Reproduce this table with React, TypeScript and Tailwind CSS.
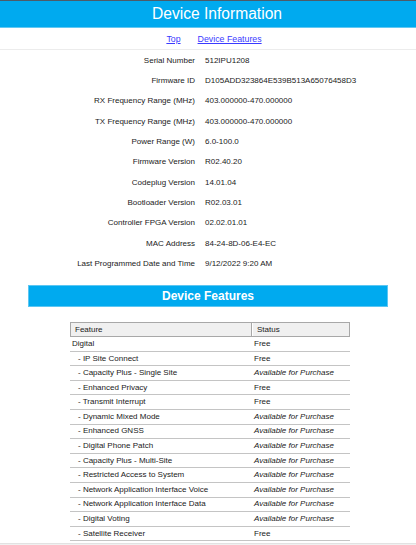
import React from "react";

const info: [string, string][] = [
  ["Serial Number", "512IPU1208"],
  ["Firmware ID", "D105ADD323864E539B513A65076458D3"],
  ["RX Frequency Range (MHz)", "403.000000-470.000000"],
  ["TX Frequency Range (MHz)", "403.000000-470.000000"],
  ["Power Range (W)", "6.0-100.0"],
  ["Firmware Version", "R02.40.20"],
  ["Codeplug Version", "14.01.04"],
  ["Bootloader Version", "R02.03.01"],
  ["Controller FPGA Version", "02.02.01.01"],
  ["MAC Address", "84-24-8D-06-E4-EC"],
  ["Last Programmed Date and Time", "9/12/2022 9:20 AM"],
];

const features: [string, string, boolean][] = [
  ["Digital", "Free", false],
  ["- IP Site Connect", "Free", true],
  ["- Capacity Plus - Single Site", "Available for Purchase", true],
  ["- Enhanced Privacy", "Free", true],
  ["- Transmit Interrupt", "Free", true],
  ["- Dynamic Mixed Mode", "Available for Purchase", true],
  ["- Enhanced GNSS", "Available for Purchase", true],
  ["- Digital Phone Patch", "Available for Purchase", true],
  ["- Capacity Plus - Multi-Site", "Available for Purchase", true],
  ["- Restricted Access to System", "Available for Purchase", true],
  ["- Network Application Interface Voice", "Available for Purchase", true],
  ["- Network Application Interface Data", "Available for Purchase", true],
  ["- Digital Voting", "Available for Purchase", true],
  ["- Satellite Receiver", "Free", true],
];

export default function App() {
  return (
    <div
      className="w-[416px] h-[545px] overflow-hidden bg-white text-[#1a1a1a]"
      style={{ fontFamily: '"Liberation Sans", Arial, sans-serif' }}
    >
      <div className="border-t border-[#4d5b68]">
        <div className="h-[26px] bg-[#00aaef] flex items-center justify-center pl-[18px] text-white text-[15.6px] leading-none">
          Device Information
        </div>
        <div className="h-px bg-[#63c8f2]" />
      </div>
      <div className="h-[22px] border-b border-[#ececec] flex items-center justify-center pl-[12px] gap-[17px] text-[8.8px] leading-none pt-[2px]">
        <span className="underline text-[#3a3aff]">Top</span>
        <span className="underline text-[#3a3aff]">Device Features</span>
      </div>
      <div className="flex flex-col pt-[0.5px]">
        {info.map(([k, v]) => (
          <div key={k} className="h-[20.33px] flex items-center text-[8px] leading-none">
            <div className="w-[195px] text-right">{k}</div>
            <div className="pl-[10px]">{v}</div>
          </div>
        ))}
      </div>
      <div className="mt-[11px] mx-[28px] h-[22px] bg-[#00aaef] border border-[#5cc6f2] flex items-center justify-center text-white font-bold text-[12px] leading-none">
        Device Features
      </div>
      <div className="mt-[15px] mx-[70px] w-[280px] text-[8px] leading-none">
        <div className="h-[15px] flex bg-[#f0f0f0] border border-[#a8a8a8]">
          <div className="w-[181px] border-r border-[#a8a8a8] flex items-center pl-[4px]">Feature</div>
          <div className="flex-1 border-l border-white flex items-center pl-[4px]">Status</div>
        </div>
        {features.map(([f, s, sub]) => (
          <div key={f} className="h-[14.6px] flex border-b border-[#c4c4c4]">
            <div className={`w-[182px] flex items-center ${sub ? "pl-[8px]" : "pl-[2px]"}`}>{f}</div>
            <div className={`flex-1 flex items-center pl-[2px] ${s === "Free" ? "" : "italic"}`}>{s}</div>
          </div>
        ))}
      </div>
      <div className="mt-[2px] h-[3px] bg-[#f0f0f0] border-t border-[#e2e2e2]" />
    </div>
  );
}
